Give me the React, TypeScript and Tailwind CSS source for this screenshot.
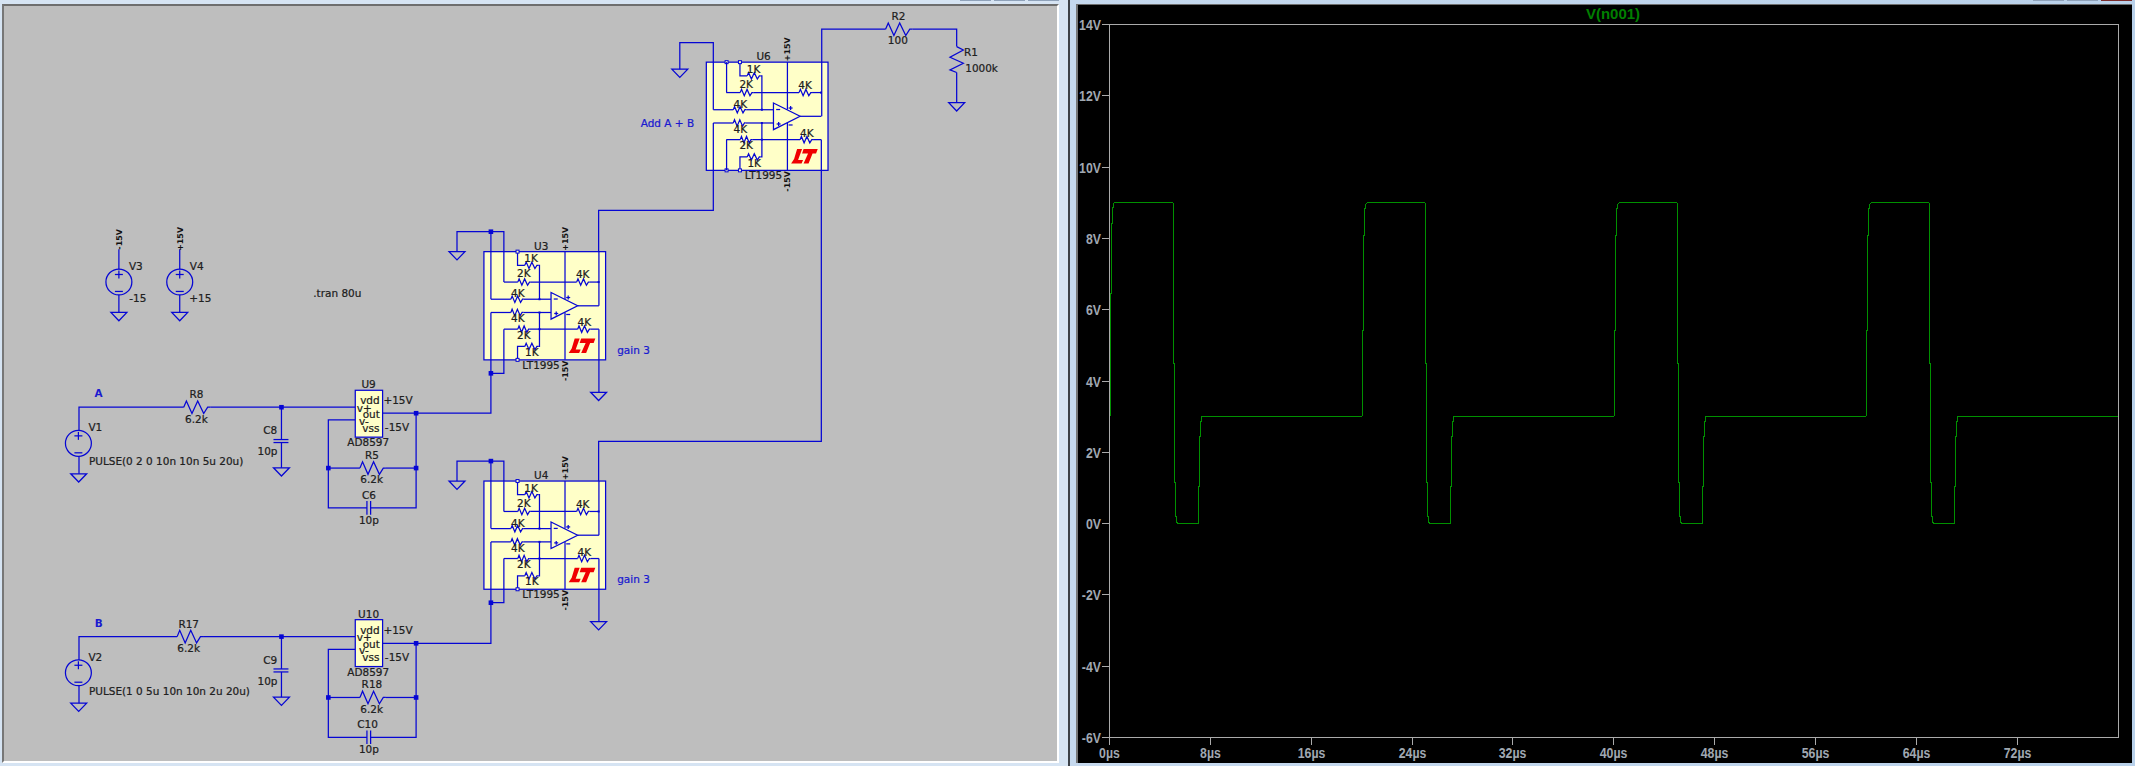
import React from "react";

type P = [number, number];
const pl = (pts: P[]) => "M" + pts.map((p) => `${p[0]} ${p[1]}`).join("L");

const hz = (x1: number, x2: number, y: number, a = 3.2): string => {
  const f = [0, 0.1, 0.31, 0.525, 0.75, 0.9, 1];
  const o = [0, -1, 1, -1, 1, 0, 0];
  return pl(f.map((k, i) => [x1 + (x2 - x1) * k, y + o[i] * a] as P));
};
const vt = (x: number, y1: number, y2: number, a = 6.7): string => {
  const f = [0, 0.13, 0.41, 0.64, 0.9, 1];
  const o = [0, 1, -1, 1, -1, 0];
  return pl(f.map((k, i) => [x + o[i] * a, y1 + (y2 - y1) * k] as P));
};

function Wire({ d }: { d: string }) {
  return <path d={d} fill="none" stroke="#0606d4" strokeWidth={1.25} />;
}
function W({ pts }: { pts: P[] }) {
  return <Wire d={pl(pts)} />;
}
function Gnd({ x, y }: { x: number; y: number }) {
  return <Wire d={`M${x - 8} ${y}L${x + 8} ${y}L${x} ${y + 8.3}Z`} />;
}
function Dot({ x, y, s = 4.6 }: { x: number; y: number; s?: number }) {
  return <rect x={x - s / 2} y={y - s / 2} width={s} height={s} fill="#0606d4" />;
}
function Pin({ x, y }: { x: number; y: number }) {
  return <rect x={x - 1.5} y={y - 1.5} width={3} height={3} fill="#ffffc8" stroke="#0606d4" strokeWidth={1} />;
}
function T({ x, y, c, a = "middle", blue, letter }: { x: number; y: number; c: string; a?: "middle" | "start" | "end"; blue?: boolean; letter?: boolean }) {
  const cls = letter
    ? "text-[10.5px] fill-[#1a1ad0] font-bold"
    : blue
      ? "text-[10.5px] fill-[#1a1ad0] stroke-[#1a1ad0] stroke-[0.25px]"
      : "text-[10.5px] fill-[#202020] stroke-[#202020] stroke-[0.22px]";
  return (
    <text x={x} y={y + 3.7} textAnchor={a} className={cls}>
      {c}
    </text>
  );
}
function TR({ x, y, c }: { x: number; y: number; c: string }) {
  return (
    <text transform={`rotate(-90 ${x} ${y})`} x={x} y={y + 3} textAnchor="middle" className="text-[8px] font-bold fill-[#101010]">
      {c}
    </text>
  );
}

function OpAmpBlock({ x, y, name, top2 }: { x: number; y: number; name: string; top2?: boolean }) {
  const X = (v: number) => x + v;
  const Y = (v: number) => y + v;
  return (
    <g>
      <rect x={x} y={y} width={122} height={108.5} fill="#ffffc8" stroke="#0606d4" strokeWidth={1.25} />
      {/* top feedback */}
      <W pts={[[X(33.7), Y(0)], [X(33.7), Y(13.7)], [X(41), Y(13.7)]]} />
      <Wire d={hz(X(41), X(54.5), Y(13.7))} />
      <W pts={[[X(54.5), Y(13.7)], [X(55.7), Y(13.7)], [X(55.7), Y(47.7)]]} />
      {/* 2K / 4K upper */}
      <W pts={[[X(20), Y(30.5)], [X(34), Y(30.5)]]} />
      <Wire d={hz(X(34), X(47), Y(30.5))} />
      <W pts={[[X(47), Y(30.5)], [X(93), Y(30.5)]]} />
      <Wire d={hz(X(93), X(106), Y(30.5))} />
      <W pts={[[X(106), Y(30.5)], [X(115.3), Y(30.5)]]} />
      {/* 4K inputs */}
      <W pts={[[X(7), Y(47.7)], [X(27), Y(47.7)]]} />
      <Wire d={hz(X(27), X(40), Y(47.7))} />
      <W pts={[[X(40), Y(47.7)], [X(67.3), Y(47.7)]]} />
      <W pts={[[X(7), Y(61)], [X(27), Y(61)]]} />
      <Wire d={hz(X(27), X(39.5), Y(61))} />
      <W pts={[[X(39.5), Y(61)], [X(67.3), Y(61)]]} />
      {/* lower */}
      <W pts={[[X(20), Y(77.7)], [X(34), Y(77.7)]]} />
      <Wire d={hz(X(34), X(46), Y(77.7))} />
      <W pts={[[X(46), Y(77.7)], [X(94), Y(77.7)]]} />
      <Wire d={hz(X(94), X(107), Y(77.7))} />
      <W pts={[[X(107), Y(77.7)], [X(115.3), Y(77.7)]]} />
      <W pts={[[X(55.7), Y(61)], [X(55.7), Y(95)], [X(54.5), Y(95)]]} />
      <Wire d={hz(X(41), X(54.5), Y(95))} />
      <W pts={[[X(41), Y(95)], [X(33.7), Y(95)], [X(33.7), Y(108.5)]]} />
      {/* supply */}
      <W pts={[[X(81.3), Y(0)], [X(81.3), Y(47.5)]]} />
      <W pts={[[X(81.3), Y(61)], [X(81.3), Y(108.5)]]} />
      {/* op amp */}
      <Wire d={`M${X(67.3)} ${Y(41)}L${X(94)} ${Y(54.3)}L${X(67.3)} ${Y(67.7)}Z`} />
      <W pts={[[X(94), Y(54.3)], [X(115.3), Y(54.3)]]} />
      <W pts={[[X(70), Y(47.5)], [X(74), Y(47.5)]]} />
      <W pts={[[X(70.5), Y(62)], [X(74.5), Y(62)]]} />
      <W pts={[[X(72.5), Y(60)], [X(72.5), Y(64)]]} />
      <W pts={[[X(82.5), Y(46)], [X(86.5), Y(46)]]} />
      <W pts={[[X(84.5), Y(44)], [X(84.5), Y(48)]]} />
      <W pts={[[X(82.5), Y(63)], [X(86.5), Y(63)]]} />
      <Dot x={X(55.7)} y={Y(47.7)} s={2} />
      <Dot x={X(55.7)} y={Y(61)} s={2} />
      <Dot x={X(55.7)} y={Y(77.7)} s={2} />
      <Dot x={X(115)} y={Y(30.5)} s={2} />
      {/* LT logo */}
      <path
        d={`M${X(91)} ${Y(87)}L${X(96)} ${Y(87)}L${X(92)} ${Y(98)}L${X(97)} ${Y(98)}L${X(95.5)} ${Y(101.5)}L${X(85)} ${Y(101.5)}L${X(88)} ${Y(97)}ZM${X(97.5)} ${Y(87)}L${X(111.7)} ${Y(87)}L${X(110)} ${Y(91.5)}L${X(106.5)} ${Y(91.5)}L${X(102.5)} ${Y(101.5)}L${X(97.5)} ${Y(101.5)}L${X(102)} ${Y(91.5)}L${X(96)} ${Y(91.5)}Z`}
        fill="#f00000"
      />
      <Pin x={X(33.7)} y={Y(0)} />
      <Pin x={X(33.7)} y={Y(108.5)} />
      {top2 && <Pin x={X(20.3)} y={Y(0)} />}
      {top2 && <Pin x={X(20.3)} y={Y(108.5)} />}
      {top2 && <W pts={[[X(20.3), Y(0)], [X(20.3), Y(30.5)]]} />}
      {top2 && <W pts={[[X(20.3), Y(77.7)], [X(20.3), Y(108.5)]]} />}
      <T x={X(47.3)} y={Y(7)} c="1K" />
      <T x={X(40)} y={Y(22)} c="2K" />
      <T x={X(99)} y={Y(23)} c="4K" />
      <T x={X(34)} y={Y(42)} c="4K" />
      <T x={X(34)} y={Y(67)} c="4K" />
      <T x={X(100.7)} y={Y(71)} c="4K" />
      <T x={X(40)} y={Y(83.7)} c="2K" />
      <T x={X(48)} y={Y(101)} c="1K" />
      <T x={X(57.4)} y={Y(-5.4)} c={name} />
      <T x={X(57.3)} y={Y(113.6)} c="LT1995" />
      <TR x={X(81)} y={Y(-13)} c="+15V" />
      <TR x={X(81)} y={Y(119.5)} c="-15V" />
    </g>
  );
}

function Source({ x, y, name, val, valX }: { x: number; y: number; name: string; val: string; valX?: number }) {
  return (
    <g>
      <circle cx={x} cy={y} r={13} fill="none" stroke="#0606d4" strokeWidth={1.25} />
      <W pts={[[x - 4, y - 7.5], [x + 4, y - 7.5]]} />
      <W pts={[[x, y - 11.5], [x, y - 3.5]]} />
      <W pts={[[x - 4, y + 9.5], [x + 4, y + 9.5]]} />
      <T x={x + 17} y={y - 15.7} c={name} />
      {valX !== undefined && <T x={valX} y={y + 16.7} c={val} />}
    </g>
  );
}

function BufferStage(p: {
  dy: number;
  rName: string;
  rx: [number, number];
  rNameX: number;
  srcName: string;
  pulse: string;
  letter: string;
  cIn: string;
  uName: string;
  rf: string;
  cf: string;
  cfX: number;
  outDy: number;
}) {
  const d = p.dy;
  return (
    <g>
      <W pts={[[78.3, 431.7 + d], [78.3, 408.3 + d], [p.rx[0], 408.3 + d]]} />
      <Wire d={hz(p.rx[0], p.rx[1], 408.3 + d, 6.3)} />
      <W pts={[[p.rx[1], 408.3 + d], [355.3, 408.3 + d]]} />
      <Dot x={281.3} y={408.3 + d} />
      <T x={p.rNameX} y={395.7 + d} c={p.rName} />
      <T x={p.rNameX} y={420 + d} c="6.2k" />
      <Source x={77.7} y={444.5 + d} name={p.srcName} val="" />
      <W pts={[[78.3, 457.5 + d], [78.3, 475 + d]]} />
      <Gnd x={78} y={475 + d} />
      <T x={88.3} y={462.7 + d} c={p.pulse} a="start" />
      <T x={98} y={394.7 + d} c={p.letter} letter />
      {/* input cap */}
      <W pts={[[281.3, 408.3 + d], [281.3, 440.7 + d]]} />
      <W pts={[[273.3, 440.7 + d], [288.3, 440.7 + d]]} />
      <W pts={[[273.3, 443.7 + d], [288.3, 443.7 + d]]} />
      <W pts={[[281.3, 443.7 + d], [281.3, 469 + d]]} />
      <Gnd x={281.3} y={469 + d} />
      <T x={270} y={431.7 + d} c={p.cIn} />
      <T x={267.3} y={452.7 + d} c="10p" />
      {/* feedback */}
      <W pts={[[382.7, 414.3 + d + p.outDy], [416.3, 414.3 + d + p.outDy], [416.3, 509.3 + d], [370.7, 509.3 + d]]} />
      <W pts={[[367, 509.3 + d], [328.3, 509.3 + d], [328.3, 421 + d], [355.3, 421 + d]]} />
      <W pts={[[370.7, 502.3 + d], [370.7, 516 + d]]} />
      <W pts={[[367, 502.3 + d], [367, 516 + d]]} />
      <W pts={[[328.3, 469.3 + d], [360, 469.3 + d]]} />
      <Wire d={hz(360, 386, 469.3 + d, 6.3)} />
      <W pts={[[386, 469.3 + d], [416.3, 469.3 + d]]} />
      <Dot x={328.3} y={469.3 + d} />
      <Dot x={416.3} y={469.3 + d} />
      <Dot x={416.3} y={414.3 + d + p.outDy} />
      <T x={372} y={456.3 + d} c={p.rf} />
      <T x={371.7} y={480.7 + d} c="6.2k" />
      <T x={p.cfX} y={496.7 + d} c={p.cf} />
      <T x={369} y={521.7 + d} c="10p" />
      {/* part */}
      <rect x={355.3} y={391.3 + d} width={27.4} height={47} fill="#ffffc8" stroke="#0606d4" strokeWidth={1.25} />
      <T x={368.7} y={385.7 + d} c={p.uName} />
      <T x={370} y={401.7 + d} c="vdd" />
      <T x={364.3} y={409 + d} c="v+" />
      <T x={371.3} y={415 + d + p.outDy} c="out" />
      <T x={364} y={422.3 + d} c="v-" />
      <T x={371} y={429 + d} c="vss" />
      <T x={383.5} y={401.7 + d} c="+15V" a="start" />
      <T x={385} y={428.7 + d} c="-15V" a="start" />
      <T x={368.3} y={443.7 + d} c="AD8597" />
    </g>
  );
}

function Schematic() {
  return (
    <svg viewBox="4 6 1054 757" className="block w-full h-full font-['DejaVu_Sans',sans-serif]">
      {/* U6 external wiring */}
      <OpAmpBlock x={707.3} y={62.3} name="U6" top2 />
      <W pts={[[680.7, 69.3], [680.7, 42.7], [714.3, 42.7], [714.3, 110]]} />
      <Gnd x={680.7} y={69.3} />
      <W pts={[[714.3, 123.3], [714.3, 211], [599.3, 211], [599.3, 252.3]]} />
      <W pts={[[823, 116.6], [823, 29.3], [887, 29.3]]} />
      <Wire d={hz(887, 914, 29.3, 6.3)} />
      <W pts={[[914, 29.3], [958.3, 29.3], [958.3, 46.7]]} />
      <Wire d={vt(958.3, 46.7, 72.7)} />
      <W pts={[[958.3, 72.7], [958.3, 103]]} />
      <Gnd x={958.3} y={103} />
      <W pts={[[822.6, 140], [822.6, 442.5], [599.3, 442.5], [599.3, 482.3]]} />
      <T x={900} y={16.7} c="R2" />
      <T x={899.3} y={40} c="100" />
      <T x={972.7} y={52.7} c="R1" />
      <T x={983.3} y={68.3} c="1000k" />
      <T x={668.3} y={123.7} c="Add A + B" blue />

      {/* U3 */}
      <OpAmpBlock x={484.3} y={252.3} name="U3" />
      <W pts={[[457.3, 252.3], [457.3, 232.3], [504.3, 232.3], [504.3, 282.8]]} />
      <W pts={[[491.3, 232.3], [491.3, 300]]} />
      <W pts={[[491.3, 313.3], [491.3, 414.3], [416.3, 414.3]]} />
      <W pts={[[491.3, 374.3], [504.3, 374.3], [504.3, 330]]} />
      <W pts={[[599.6, 252.3], [599.6, 306.6]]} />
      <W pts={[[599.6, 330], [599.6, 393.3]]} />
      <Gnd x={599.3} y={393.3} />
      <Gnd x={457.3} y={252.3} />
      <Dot x={491.3} y={232.3} />
      <Dot x={491.3} y={374.3} />
      <T x={634.3} y={351} c="gain 3" blue />

      {/* U4 */}
      <OpAmpBlock x={484.3} y={482.3} name="U4" />
      <W pts={[[457.3, 482.3], [457.3, 462.3], [504.3, 462.3], [504.3, 512.8]]} />
      <W pts={[[491.3, 462.3], [491.3, 530]]} />
      <W pts={[[491.3, 543.3], [491.3, 645], [416.3, 645]]} />
      <W pts={[[491.3, 604.3], [504.3, 604.3], [504.3, 560]]} />
      <W pts={[[599.6, 482.3], [599.6, 536.6]]} />
      <W pts={[[599.6, 560], [599.6, 623.3]]} />
      <Gnd x={599.3} y={623.3} />
      <Gnd x={457.3} y={482.3} />
      <Dot x={491.3} y={462.3} />
      <Dot x={491.3} y={604.3} />
      <T x={634.3} y={581} c="gain 3" blue />

      {/* power sources */}
      <W pts={[[118.3, 250], [118.3, 270]]} />
      <W pts={[[118.3, 295.7], [118.3, 313.3]]} />
      <Gnd x={118.3} y={313.3} />
      <Source x={118.3} y={282.7} name="V3" val="-15" valX={137.3} />
      <TR x={118.3} y={240} c="-15V" />
      <W pts={[[179.3, 250], [179.3, 270]]} />
      <W pts={[[179.3, 295.7], [179.3, 313.3]]} />
      <Gnd x={179.3} y={313.3} />
      <Source x={179.3} y={282.7} name="V4" val="+15" valX={200} />
      <TR x={179.3} y={239.5} c="+15V" />
      <T x={337.3} y={294} c=".tran 80u" />

      <BufferStage dy={0} rName="R8" rx={[183.3, 210]} rNameX={196} srcName="V1" pulse="PULSE(0 2 0 10n 10n 5u 20u)" letter="A" cIn="C8" uName="U9" rf="R5" cf="C6" cfX={369} outDy={0} />
      <BufferStage dy={230} rName="R17" rx={[176.7, 202.7]} rNameX={188.3} srcName="V2" pulse="PULSE(1 0 5u 10n 10n 2u 20u)" letter="B" cIn="C9" uName="U10" rf="R18" cf="C10" cfX={367.7} outDy={0.7} />
    </svg>
  );
}

const trace = (() => {
  const pts: P[] = [[1110.5, 415.5], [1110.5, 293.5], [1111.5, 293.5], [1111.5, 223.5], [1112.5, 223.5], [1112.5, 207.5], [1113.5, 207.5], [1113.5, 203.5], [1114.5, 202.5]];
  const starts = [0, 252, 504, 756];
  starts.forEach((o, i) => {
    const seq: P[] = [[1172.5, 202.5], [1173.5, 203.5], [1173.5, 363.5], [1174.5, 363.5], [1174.5, 482.5], [1175.5, 482.5], [1175.5, 516.5], [1176.5, 516.5], [1176.5, 522.5], [1178.5, 523.5], [1198.5, 523.5], [1198.5, 486.5], [1199.5, 486.5], [1199.5, 436.5], [1200.5, 436.5], [1200.5, 421.5], [1201.5, 421.5], [1201.5, 416.5]];
    seq.forEach((p) => pts.push([p[0] + o, p[1]]));
    if (i < 3) {
      const r: P[] = [[1361.5, 416.5], [1362.5, 415.5], [1362.5, 330.5], [1363.5, 330.5], [1363.5, 235.5], [1364.5, 235.5], [1364.5, 208.5], [1365.5, 208.5], [1365.5, 204.5], [1366.5, 203.5], [1367.5, 202.5]];
      r.forEach((p) => pts.push([p[0] + o, p[1]]));
    }
  });
  pts.push([2118, 416.5]);
  return pl(pts);
})();

const yLabels = ["14V", "12V", "10V", "8V", "6V", "4V", "2V", "0V", "-2V", "-4V", "-6V"];
const xLabels = ["0µs", "8µs", "16µs", "24µs", "32µs", "40µs", "48µs", "56µs", "64µs", "72µs"];

function Plot() {
  return (
    <svg viewBox="1078 5 1054 758" className="block w-full h-full font-['Liberation_Sans',sans-serif]">
      <rect x={1109.5} y={24.5} width={1008.5} height={713} fill="none" stroke="#aaaaaa" strokeWidth={1} shapeRendering="crispEdges" />
      {yLabels.map((l, i) => {
        const y = Math.round(24 + i * 71.3) + 0.5;
        return (
          <g key={l}>
            <line x1={1102} x2={1109} y1={y} y2={y} stroke="#aaaaaa" strokeWidth={1} shapeRendering="crispEdges" />
            <text transform={`translate(1101 ${y + 5}) scale(0.88 1)`} textAnchor="end" className="text-[14px] font-bold fill-[#a0a8b2]">
              {l}
            </text>
          </g>
        );
      })}
      {xLabels.map((l, i) => {
        const x = Math.round(1109 + i * 100.85) + 0.5;
        return (
          <g key={l}>
            <line x1={x} x2={x} y1={738} y2={745} stroke="#aaaaaa" strokeWidth={1} shapeRendering="crispEdges" />
            <text transform={`translate(${x} 758) scale(0.88 1)`} textAnchor="middle" className="text-[14px] font-bold fill-[#a0a8b2]">
              {l}
            </text>
          </g>
        );
      })}
      <text x={1613} y={19} textAnchor="middle" className="text-[15px] font-bold fill-[#007f00]">
        V(n001)
      </text>
      <path d={trace} fill="none" stroke="#009000" strokeWidth={1} shapeRendering="crispEdges" />
    </svg>
  );
}

function TopStrip({ last }: { last: string }) {
  return (
    <div className="h-[4px] flex justify-end gap-[3px]">
      <div className="w-[31px] h-[1px] bg-[#8fa2ba]" />
      <div className="w-[31px] h-[1px] bg-[#8fa2ba]" />
      <div className={`w-[31px] h-[1px] ${last}`} />
    </div>
  );
}

export default function App() {
  return (
    <div className="w-[2135px] h-[766px] flex overflow-hidden bg-[#d6e4f3]">
      <div className="w-[1068px] h-full flex flex-col pl-[2px] pr-[9px] pb-[3px]">
        <TopStrip last="bg-[#8fa2ba]" />
        <div className="flex-1 min-h-0 bg-[#bebebe] border-2 border-t-[#6e6e6e] border-l-[#777777] border-r-white border-b-white">
          <Schematic />
        </div>
      </div>
      <div className="w-[2px] h-full bg-[#3c4148]" />
      <div className="w-[1065px] h-full flex flex-col pl-[6px] pr-[3px] pb-[3px] bg-gradient-to-r from-[#c6d9ee] to-[#b9d1ea]">
        <TopStrip last="bg-[#7a2c2c]" />
        <div className="flex-1 min-h-0 bg-black border-t border-l-2 border-t-[#6e6e6e] border-l-[#777777]">
          <Plot />
        </div>
      </div>
    </div>
  );
}
